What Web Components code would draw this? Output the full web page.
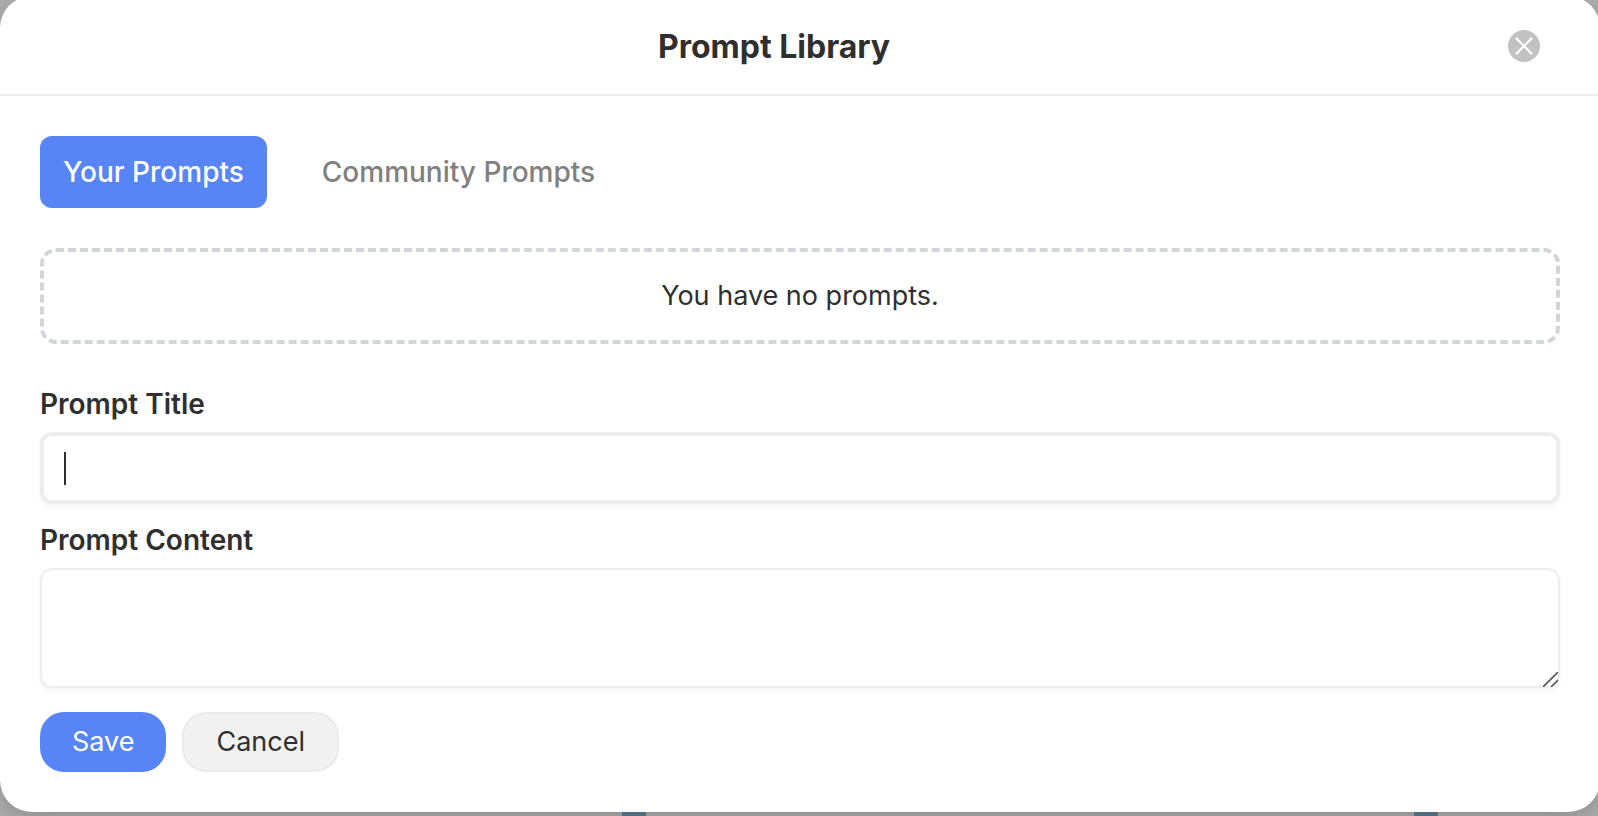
<!DOCTYPE html>
<html lang="en">
<head>
<meta charset="utf-8">
<meta name="viewport" content="width=device-width, initial-scale=1">
<title>Prompt Library</title>
<style>
  body {
    margin: 0;
    overflow: hidden;
    font-family: Inter, "Liberation Sans", sans-serif;
    font-size: 27px;
    line-height: 40px;
    color: #2f2f2f;
    --accent: #5885f5;
    --line: #ededed;
  }
</style>
</head>
<body>
<modal-backdrop>
  <modal-dialog heading="Prompt Library">
    <prompt-tabs>
      <prompt-tab selected>Your Prompts</prompt-tab>
      <prompt-tab>Community Prompts</prompt-tab>
    </prompt-tabs>
    <empty-state>You have no prompts.</empty-state>
    <prompt-form></prompt-form>
  </modal-dialog>
</modal-backdrop>

<script>
const define = (name, html, setup) => {
  const template = document.createElement('template');
  template.innerHTML = html;
  customElements.define(name, class extends HTMLElement {
    constructor() {
      super();
      this.attachShadow({ mode: 'open' }).append(template.content.cloneNode(true));
    }
    connectedCallback() {
      if (setup) setup(this, this.shadowRoot);
    }
  });
};

define('modal-backdrop', `
  <style>
    :host {
      display: block;
      box-sizing: border-box;
      min-height: 100vh;
      overflow: hidden;
      background:
        linear-gradient(#5f8094, #5f8094) calc(50% - 165px) 100% / 24px 40px no-repeat,
        linear-gradient(#5f8094, #5f8094) calc(50% + 627px) 100% / 24px 40px no-repeat,
        #b3b3b3;
    }
  </style>
  <slot></slot>`);

define('modal-dialog', `
  <style>
    :host {
      display: block;
      margin: -4px -2px 0 0;
      border-radius: 32px;
      background: #fff;
      box-shadow: 0 8px 40px rgba(0, 0, 0, .26);
    }
    header {
      display: flex;
      align-items: flex-start;
      padding: 34px 60px 30px 40px;
      border-bottom: 2px solid var(--line);
    }
    h2 {
      flex: 1;
      margin: 0;
      font-size: 32px;
      line-height: 34px;
      font-weight: 700;
      text-align: center;
    }
    button {
      display: block;
      width: 32px;
      height: 32px;
      padding: 0;
      border: 0;
      border-radius: 50%;
      background: #c2c2c2;
      cursor: pointer;
    }
    svg { display: block; }
    main {
      display: flex;
      flex-direction: column;
      gap: 40px;
      padding: 40px;
    }
  </style>
  <header>
    <h2></h2>
    <button type="button" aria-label="Close">
      <svg width="32" height="32" viewBox="0 0 32 32" fill="none" stroke="#fff" stroke-width="2.2" stroke-linecap="round" aria-hidden="true">
        <path d="M8.6 8.6 23.4 23.4M23.4 8.6 8.6 23.4"/>
      </svg>
    </button>
  </header>
  <main><slot></slot></main>`,
  (host, root) => { root.querySelector('h2').textContent = host.getAttribute('heading'); });

define('prompt-tabs', `
  <style>
    :host { display: flex; gap: 32px; }
  </style>
  <slot></slot>`);

define('prompt-tab', `
  <style>
    :host { display: block; }
    button {
      display: block;
      padding: 16px 23px;
      border: 0;
      border-radius: 12px;
      background: none;
      color: #808080;
      font: inherit;
      font-size: 28px;
      font-weight: 500;
      cursor: pointer;
    }
    :host([selected]) button { background: var(--accent); color: #fff; }
  </style>
  <button type="button"><slot></slot></button>`);

define('empty-state', `
  <style>
    :host {
      display: block;
      padding: 24px;
      border: 4px dashed #d2d5da;
      border-radius: 16px;
      text-align: center;
    }
  </style>
  <slot></slot>`);

define('prompt-form', `
  <style>
    :host { display: block; }
    form { display: flex; flex-direction: column; gap: 16px; }
    .field { display: flex; flex-direction: column; gap: 8px; }
    label { font-size: 28px; font-weight: 600; }
    input, textarea {
      display: block;
      box-sizing: border-box;
      width: 100%;
      margin: 0;
      border: 2px solid var(--line);
      border-radius: 12px;
      outline: 0;
      background: #fff;
      color: inherit;
      font: inherit;
      box-shadow: 0 2px 4px rgba(0, 0, 0, .05);
    }
    input {
      height: 72px;
      padding: 12px 20px;
      border-width: 4px;
      caret-color: transparent;
      background: linear-gradient(#2f2f2f, #2f2f2f) 20px 50% / 2px 33px no-repeat #fff;
    }
    input:not(:placeholder-shown) { caret-color: auto; background: #fff; }
    textarea { height: 120px; padding: 16px 20px; resize: none; }
    .area { position: relative; }
    .grip { position: absolute; right: 2px; bottom: 1px; display: block; }
    .actions { display: flex; gap: 16px; margin-top: 8px; }
    button {
      padding: 10px 32px;
      border: 0;
      border-radius: 24px;
      background: var(--accent);
      color: #fff;
      font: inherit;
      cursor: pointer;
    }
    .plain {
      padding: 8px 32px;
      border: 2px solid #ebebeb;
      background: #f1f1f1;
      color: #2f2f2f;
    }
  </style>
  <form>
    <div class="field">
      <label for="title">Prompt Title</label>
      <input id="title" type="text" placeholder=" ">
    </div>
    <div class="field">
      <label for="content">Prompt Content</label>
      <div class="area">
        <textarea id="content"></textarea>
        <svg class="grip" width="15" height="15" viewBox="0 0 15 15" stroke="#555" stroke-width="1.6" aria-hidden="true">
          <path d="M0 15 15 0M8 15l7-7"/>
        </svg>
      </div>
    </div>
    <div class="actions">
      <button type="button">Save</button>
      <button type="button" class="plain">Cancel</button>
    </div>
  </form>`);
</script>
</body>
</html>
